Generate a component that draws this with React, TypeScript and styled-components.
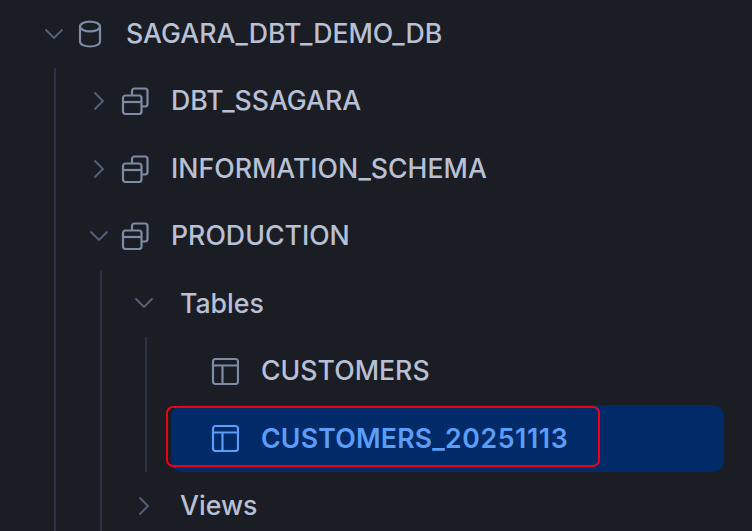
import React from 'react';
import styled, { createGlobalStyle } from 'styled-components';

const GlobalStyle = createGlobalStyle`
  html, body {
    margin: 0;
    height: 531px;
    overflow: hidden;
    background: #1a1d24;
  }
`;

const Tree = styled.div`
  width: 724px;
  height: 531px;
  padding-top: 0.2px;
  overflow: hidden;
  font-family: Inter, 'Liberation Sans', sans-serif;
`;

const Children = styled.div<{ $offset: number }>`
  margin-left: ${({ $offset }) => $offset}px;
  border-left: 2px solid #2a3246;
`;

const Row = styled.div<{ $indent: number; $inset?: number; $selected?: boolean }>`
  position: relative;
  height: 67.4px;
  display: flex;
  align-items: center;
  padding-left: ${({ $indent }) => $indent}px;
  margin-left: ${({ $inset }) => $inset ?? 0}px;
  border-radius: 12px;
  background: ${({ $selected }) => ($selected ? '#002a68' : 'transparent')};
`;

const ChevronSlot = styled.span<{ $gap: number }>`
  flex: 0 0 28px;
  display: flex;
  justify-content: center;
  margin-right: ${({ $gap }) => $gap}px;
  color: #56637a;
`;

const IconSlot = styled.span<{ $selected?: boolean }>`
  flex: 0 0 28px;
  height: 28px;
  margin-right: 22px;
  color: ${({ $selected }) => ($selected ? '#5c9df5' : '#7d8ba3')};
`;

const Label = styled.span<{ $selected?: boolean }>`
  font-size: 26.7px;
  font-weight: ${({ $selected }) => ($selected ? 600 : 500)};
  letter-spacing: ${({ $selected }) => ($selected ? '0.2px' : 'normal')};
  line-height: 1;
  margin-bottom: ${({ $selected }) => ($selected ? 0 : 1)}px;
  white-space: nowrap;
  color: ${({ $selected }) => ($selected ? '#5c9df5' : '#b9c0d4')};
`;

const Digits = styled.span`
  letter-spacing: 0.6px;
`;

const Highlight = styled.div`
  position: absolute;
  left: -5px;
  top: 1px;
  width: 434px;
  height: 61px;
  box-sizing: border-box;
  border: 2px solid #f00014;
  border-radius: 7px;
  pointer-events: none;
`;

const Chevron: React.FC<{ open?: boolean }> = ({ open }) => (
  <svg width="20" height="20" viewBox="0 0 20 20" fill="none" stroke="currentColor" strokeWidth="1.8">
    <path d={open ? 'M1.5 5.5 L10 14 L18.5 5.5' : 'M5.5 1.5 L14 10 L5.5 18.5'} />
  </svg>
);

const DatabaseIcon = () => (
  <svg width="28" height="28" viewBox="0 0 28 28" fill="none" stroke="currentColor" strokeWidth="2.2">
    <ellipse cx="14" cy="6.5" rx="10" ry="4.8" />
    <path d="M4 6.5 V21.5 C4 24.5 8.5 26.5 14 26.5 C19.5 26.5 24 24.5 24 21.5 V6.5" />
  </svg>
);

const SchemaIcon = () => (
  <svg width="28" height="28" viewBox="0 0 28 28" fill="none" stroke="currentColor" strokeWidth="2.2">
    <rect x="2" y="8.5" width="18.5" height="18.5" rx="2.5" />
    <path d="M2 15 H20.5" />
    <path d="M11 8.5 V4 A2.5 2.5 0 0 1 13.5 1.5 H24 A2.5 2.5 0 0 1 26.5 4 V17 A2.5 2.5 0 0 1 24 19.5 H20.5" />
  </svg>
);

const TableIcon = () => (
  <svg width="28" height="28" viewBox="0 0 28 28" fill="none" stroke="currentColor" strokeWidth="2.2">
    <rect x="2" y="2" width="25" height="25" rx="2.5" />
    <path d="M2 8.5 H27 M11.5 8.5 V27" />
  </svg>
);

export default function App() {
  return (
    <>
      <GlobalStyle />
      <Tree>
        <Row $indent={40}>
          <ChevronSlot $gap={8}>
            <Chevron open />
          </ChevronSlot>
          <IconSlot>
            <DatabaseIcon />
          </IconSlot>
          <Label>SAGARA_DBT_DEMO_DB</Label>
        </Row>
        <Children $offset={54}>
          <Row $indent={29}>
            <ChevronSlot $gap={8}>
              <Chevron />
            </ChevronSlot>
            <IconSlot>
              <SchemaIcon />
            </IconSlot>
            <Label>DBT_SSAGARA</Label>
          </Row>
          <Row $indent={29}>
            <ChevronSlot $gap={8}>
              <Chevron />
            </ChevronSlot>
            <IconSlot>
              <SchemaIcon />
            </IconSlot>
            <Label>INFORMATION_SCHEMA</Label>
          </Row>
          <Row $indent={29}>
            <ChevronSlot $gap={8}>
              <Chevron open />
            </ChevronSlot>
            <IconSlot>
              <SchemaIcon />
            </IconSlot>
            <Label>PRODUCTION</Label>
          </Row>
          <Children $offset={44}>
            <Row $indent={28}>
              <ChevronSlot $gap={22}>
                <Chevron open />
              </ChevronSlot>
              <Label>Tables</Label>
            </Row>
            <Children $offset={43}>
              <Row $indent={64}>
                <IconSlot>
                  <TableIcon />
                </IconSlot>
                <Label>CUSTOMERS</Label>
              </Row>
              <Row $indent={40} $inset={24} $selected>
                <IconSlot $selected>
                  <TableIcon />
                </IconSlot>
                <Label $selected>
                  CUSTOMERS_<Digits>20251113</Digits>
                </Label>
                <Highlight />
              </Row>
            </Children>
            <Row $indent={28}>
              <ChevronSlot $gap={22}>
                <Chevron />
              </ChevronSlot>
              <Label>Views</Label>
            </Row>
          </Children>
        </Children>
      </Tree>
    </>
  );
}
